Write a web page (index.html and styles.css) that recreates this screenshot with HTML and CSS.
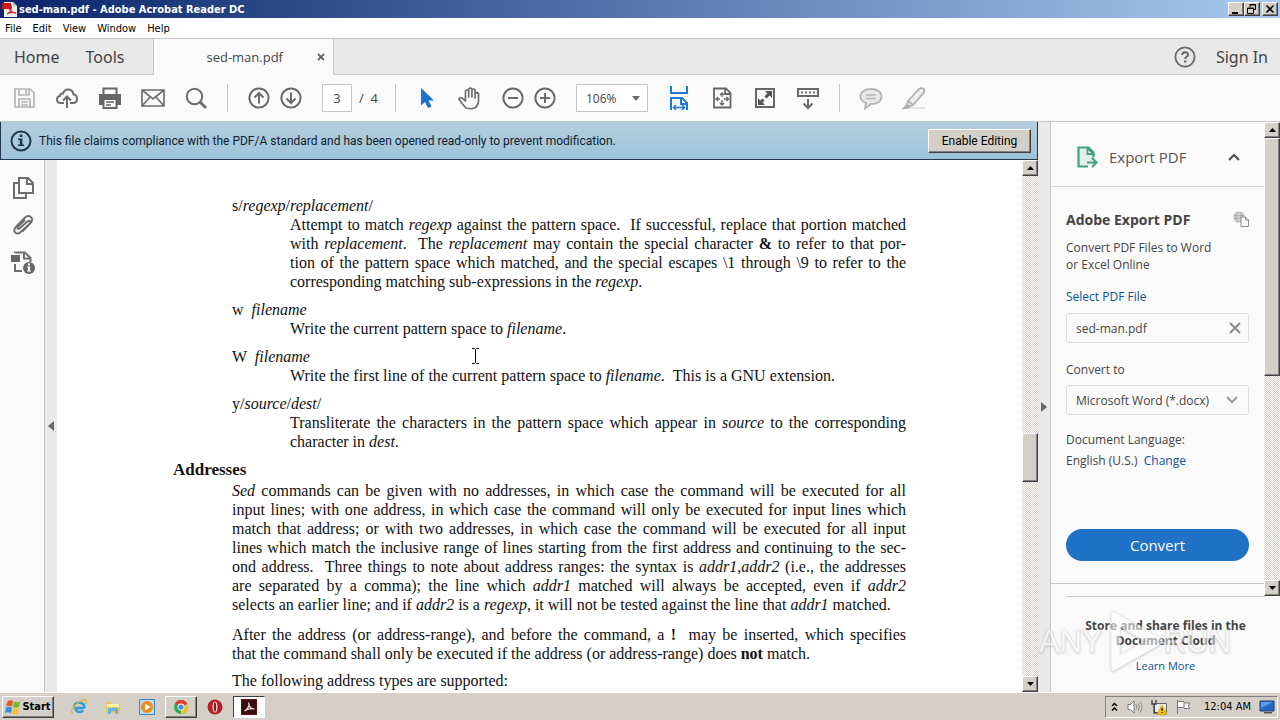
FILE: index.html
```html
<!DOCTYPE html>
<html lang="en">
<head>
<meta charset="utf-8">
<meta name="viewport" content="width=device-width, initial-scale=1">
<title>sed-man.pdf - Adobe Acrobat Reader DC</title>
<link rel="stylesheet" href="styles.css">
</head>
<body>
<div class="app">
  <header class="titlebar">
    <svg class="title-icon" viewBox="0 0 16 16"><path d="M2 1h9l4 4v11H2z" fill="#f3f0ee"/><path d="M11 1l4 4h-4z" fill="#bbb"/><path d="M0 2h9v6H0z" fill="#c8161d"/><path d="M5 13c4-2 5-6 4-9M6 6c2 4 5 6 8 6M5 13c3-2 6-2 9-1" fill="none" stroke="#d3222a" stroke-width="1.3"/></svg>
    <span class="title">sed-man.pdf - Adobe Acrobat Reader DC</span>
    <div class="window-buttons">
      <button class="raised winbtn" aria-label="Minimize"><svg viewBox="0 0 12 10"><path d="M2 8h6v2H2z"/></svg></button>
      <button class="raised winbtn" aria-label="Restore"><svg viewBox="0 0 12 10"><path d="M4 .5h5.500v5H8M4 0v3M4 1h6" fill="none" stroke="#000"/><path d="M1.500 4h6v5.500h-6zM1 4.500h7" fill="none" stroke="#000"/></svg></button>
      <button class="raised winbtn close" aria-label="Close"><svg viewBox="0 0 12 10"><path d="M2.500 1.500l7 7M9.500 1.500l-7 7" stroke="#000" stroke-width="1.600"/></svg></button>
    </div>
  </header>

  <nav class="menubar">
    <button>File</button><button>Edit</button><button>View</button><button>Window</button><button>Help</button>
  </nav>

  <nav class="tabs">
    <div class="tabs-main"><button class="tab-link">Home</button><button class="tab-link">Tools</button></div>
    <div class="tab-active"><span>sed-man.pdf</span><button class="tab-close" aria-label="Close tab"><svg viewBox="0 0 8 8"><path d="M1 1l6 6M7 1L1 7" stroke="#666" stroke-width="1.800"/></svg></button></div>
    <div class="tabs-end">
      <button class="help" aria-label="Help"><svg viewBox="0 0 22 22"><circle cx="11" cy="11" r="9.600" fill="none" stroke="#6a6a6a" stroke-width="1.800"/><path d="M8.200 9q0-2.800 2.900-2.800T14 8.800q0 1.300-1.600 2.200Q11.200 11.700 11.200 13" fill="none" stroke="#666" stroke-width="2"/><path d="M10 14.500h2.300v2H10z" fill="#666"/></svg></button>
      <button class="tab-link">Sign In</button>
    </div>
  </nav>

  <div class="toolbar">
    <div class="group">
      <button class="tool" aria-label="Save"><svg viewBox="0 0 24 24" fill="none" stroke="#b4b4b4" stroke-width="2"><path d="M3 3h15l4 4v14H3zM7 3v6h10V3M7 21v-8h11v8M14 4v4M9 16h7M9 19h7" stroke-width="1.700"/></svg></button>
      <button class="tool" aria-label="Upload"><svg viewBox="0 0 24 24" fill="none" stroke="#6e6e6e" stroke-width="2"><path d="M9 17H6Q2 17 2 13.500 2 10.500 5 10 5 7 8 7.500 9.500 3 13.500 3.500 18 4 18.500 8.500 22 9 22 13 22 17 18 17h-3M12 22V11M8 14.500l4-4 4 4"/></svg></button>
      <button class="tool" aria-label="Print"><svg viewBox="0 0 24 24"><path d="M1 8h22v11h-4v-4H5v4H1z" fill="#666"/><path d="M5.500 9V2.500h13V9" fill="#fafafa" stroke="#666" stroke-width="2"/><path d="M5.500 13h13v9h-13z" fill="#fafafa" stroke="#666" stroke-width="2"/><path d="M8 16h8M8 19h5" stroke="#666" stroke-width="1.500"/><path d="M1 8h22v3H1z" fill="#666"/></svg></button>
      <button class="tool" aria-label="Email"><svg viewBox="0 0 24 24" fill="none" stroke="#6e6e6e" stroke-width="1.700"><path d="M1 4h22v16H1zM1 4l11 9 11-9M1 20l8-9M23 20l-8-9"/></svg></button>
      <button class="tool" aria-label="Find"><svg viewBox="0 0 24 24" fill="none" stroke="#6e6e6e"><circle cx="10.500" cy="10.500" r="7.700" stroke-width="2"/><path d="M16 16l6 6" stroke-width="3"/></svg></button>
    </div>
    <i class="sep"></i>
    <div class="group tight">
      <button class="tool" aria-label="Previous page"><svg viewBox="0 0 24 24" fill="none" stroke="#6a6a6a" stroke-width="2"><circle cx="12" cy="12" r="9.600"/><path d="M12 17.500V7M7.500 11.500L12 7l4.500 4.500"/></svg></button>
      <button class="tool" aria-label="Next page"><svg viewBox="0 0 24 24" fill="none" stroke="#6a6a6a" stroke-width="2"><circle cx="12" cy="12" r="9.600"/><path d="M12 6.500V17M7.500 12.500L12 17l4.500-4.500"/></svg></button>
    </div>
    <label class="page-field"><input type="text" value="3" aria-label="Page number"><span>/&nbsp; 4</span></label>
    <i class="sep"></i>
    <div class="group">
      <button class="tool" aria-label="Select"><svg viewBox="0 0 24 24"><path d="M6 2v17.500l4-3.500 3 6 3.500-1.600-3-6H19z" fill="#1f73cf"/></svg></button>
      <button class="tool" aria-label="Hand"><svg viewBox="0 0 24 24" fill="none" stroke="#6e6e6e" stroke-width="1.700" stroke-linejoin="round" stroke-linecap="round"><path d="M8 22Q4 18 1 13 1.500 11 4 12l3.500 3V5q1.600-2 3.200 0v6V3q1.600-2 3.200 0v8V4q1.600-2 3.200 0v8V7.500q1.700-1.500 3.400 0V15q0 4-3.500 7-4.500 1.500-9 0z"/></svg></button>
      <div class="group tight">
        <button class="tool" aria-label="Zoom out"><svg viewBox="0 0 24 24" fill="none" stroke="#6a6a6a" stroke-width="2"><circle cx="12" cy="12" r="9.600"/><path d="M7 12h10"/></svg></button>
        <button class="tool" aria-label="Zoom in"><svg viewBox="0 0 24 24" fill="none" stroke="#6a6a6a" stroke-width="2"><circle cx="12" cy="12" r="9.600"/><path d="M7 12h10M12 7v10"/></svg></button>
      </div>
    </div>
    <div class="picker zoom"><select aria-label="Zoom level"><option>106%</option></select><svg viewBox="0 0 8 5"><path d="M0 0h8L4 5z" fill="#6a6a6a"/></svg></div>
    <div class="group">
      <button class="tool" aria-label="Fit width"><svg viewBox="0 0 24 24" fill="none" stroke="#1f78d1" stroke-width="2"><path d="M4 0v7h16V0M4 24V12h11l5 5v7M14 12v6h6"/><path d="M7 21.500h10M9 19l-2.500 2.500L9 24M15 19l2.500 2.500L15 24" stroke-width="1.500"/></svg></button>
      <button class="tool" aria-label="Fit page"><svg viewBox="0 0 24 24" fill="none" stroke="#666" stroke-width="1.800"><path d="M4 2.500h12l4.500 4.500v14.500H4zM15 2.500V8h5.500"/><path d="M12 7v4M12 14v5M6 13h4M14 13h5M10 9l2-2 2 2M10 17l2 2 2-2M8 11l-2 2 2 2M16.500 11l2 2-2 2" stroke-width="1.300"/></svg></button>
      <button class="tool" aria-label="Full screen"><svg viewBox="0 0 24 24"><path d="M3 3h18v18H3z" fill="#fafafa" stroke="#666" stroke-width="2"/><path d="M12 5h7v7l-2.400-2.400-3 3-2.200-2.200 3-3zM5 12l2.400 2.400 2-2 2.200 2.200-2 2L12 19H5z" fill="#555"/></svg></button>
      <button class="tool" aria-label="Read mode"><svg viewBox="0 0 24 24" fill="none" stroke="#6a6a6a" stroke-width="2"><path d="M2 3h20v7H2z"/><path d="M5 6.500h14" stroke-dasharray="2 2"/><path d="M12 13v9M7.500 17.500L12 22l4.500-4.500"/></svg></button>
    </div>
    <i class="sep"></i>
    <div class="group">
      <button class="tool" aria-label="Comment"><svg viewBox="0 0 24 24" fill="#e9e9e9" stroke="#b4b4b4" stroke-width="1.800"><path d="M12 3c6 0 10.500 3 10.500 7.500S18 18 12 18l-6 4.500 1-5.500C3 15.500 1.500 13 1.500 10.500 1.500 6 6 3 12 3z"/><path d="M7 9h10M7 12.500h10" stroke-width="1.400"/></svg></button>
      <button class="tool" aria-label="Highlight"><svg viewBox="0 0 24 24" fill="#eee" stroke="#b0b0b0" stroke-width="1.800"><path d="M8 21h15v2H6z" fill="#e4e4e4" stroke="none"/><path d="M6 15L16.500 3.500Q19 1 21.500 3q1.500 1.500 0 4L11 19l-5-4zM6 15l-1 4 2 1.500 4-1.500"/><path d="M5 19l-3.500 3.500L6 22l1.500-1.500z" fill="#aaa"/></svg></button>
    </div>
  </div>

  <main class="workspace">
    <section class="viewer">
      <div class="notice">
        <svg viewBox="0 0 22 22"><circle cx="11" cy="11" r="9.500" fill="none" stroke="#22384a" stroke-width="2"/><path d="M9.800 4.500h2.600V7H9.800zM8 8.500h4.400v6H14V16H8v-1.500h1.800V10H8z" fill="#22384a"/></svg>
        <p>This file claims compliance with the PDF/A standard and has been opened read-only to prevent modification.</p>
        <button class="raised enable">Enable Editing</button>
      </div>
      <div class="viewer-body">
        <aside class="rail">
          <button aria-label="Page thumbnails"><svg viewBox="0 0 24 24" fill="none" stroke="#6e6e6e" stroke-width="2"><path d="M8 2h9l5 5v10H8zM16 2v6h6M8 7H3v15h12v-5"/></svg></button>
          <button aria-label="Attachments"><svg viewBox="0 0 24 24" fill="none" stroke="#6e6e6e" stroke-width="1.900" stroke-linecap="round"><path d="M8.500 15.500l8-7c2-1.800 4 .3 2.200 2.200l-9 8.300c-4.500 4-8.500-1-5-4.800L13.500 5c4.500-4.500 10 0 6.300 5l-8 8M8.500 15.500c-1.500 1.500-3-.5-1.500-2l6.500-6"/></svg></button>
          <button aria-label="Standards"><svg viewBox="0 0 24 24"><path d="M4 3v-.5h10l5.500 5.500v4M13 2.500V8.500h6.500M4 14v7h7" fill="none" stroke="#6e6e6e" stroke-width="2"/><path d="M0 5h9v7H0z" fill="#666"/><circle cx="18" cy="18" r="6" fill="#666"/><path d="M17 13.500h2v2h-2zM16 16.500h3v4h1v1h-4v-1h1v-3h-1z" fill="#fff"/></svg></button>
        </aside>
        <button class="grip left" aria-label="Open navigation pane"><svg viewBox="0 0 6 10"><path d="M6 0v10L0 5z" fill="#6a6a6a"/></svg></button>
        <article class="page">
          <h3 class="term">s/<i>regexp</i>/<i>replacement</i>/</h3>
          <p class="def"><span class="line">Attempt to match <i>regexp</i> against the pattern space. &nbsp;If successful, replace that portion matched</span><span class="line">with <i>replacement</i>. &nbsp;The <i>replacement</i> may contain the special character <b>&amp;</b> to refer to that por-</span><span class="line">tion of the pattern space which matched, and the special escapes \1 through \9 to refer to the</span><span class="line end">corresponding matching sub-expressions in the <i>regexp</i>.</span></p>
          <h3 class="term">w &nbsp;<i>filename</i></h3>
          <p class="def">Write the current pattern space to <i>filename</i>.</p>
          <h3 class="term">W &nbsp;<i>filename</i></h3>
          <p class="def">Write the first line of the current pattern space to <i>filename</i>. &nbsp;This is a GNU extension.</p>
          <h3 class="term">y/<i>source</i>/<i>dest</i>/</h3>
          <p class="def"><span class="line">Transliterate the characters in the pattern space which appear in <i>source</i> to the corresponding</span><span class="line end">character in <i>dest</i>.</span></p>
          <h2>Addresses</h2>
          <p><span class="line"><i>Sed</i> commands can be given with no addresses, in which case the command will be executed for all</span><span class="line">input lines; with one address, in which case the command will only be executed for input lines which</span><span class="line">match that address; or with two addresses, in which case the command will be executed for all input</span><span class="line">lines which match the inclusive range of lines starting from the first address and continuing to the sec-</span><span class="line">ond address. &nbsp;Three things to note about address ranges: the syntax is <i>addr1</i>,<i>addr2</i> (i.e., the addresses</span><span class="line">are separated by a comma); the line which <i>addr1</i> matched will always be accepted, even if <i>addr2</i></span><span class="line end">selects an earlier line; and if <i>addr2</i> is a <i>regexp</i>, it will not be tested against the line that <i>addr1</i> matched.</span></p>
          <p class="para"><span class="line">After the address (or address-range), and before the command, a <b>!</b> &nbsp;may be inserted, which specifies</span><span class="line end">that the command shall only be executed if the address (or address-range) does <b>not</b> match.</span></p>
          <p class="para last">The following address types are supported:</p>
          <svg class="ibeam" viewBox="0 0 9 16"><path d="M1 .5h2.500l1 1 1-1H8M4.500 1.500v13M1 15.500h2.500l1-1 1 1H8" fill="none" stroke="#000"/></svg>
        </article>
        <div class="scrollbar">
          <button class="raised arrow" aria-label="Scroll up"><svg viewBox="0 0 7 4"><path d="M0 4h7L3.500 0z"/></svg></button>
          <span class="space-before"></span><span class="raised thumb"></span><span class="space-after"></span>
          <button class="raised arrow" aria-label="Scroll down"><svg viewBox="0 0 7 4"><path d="M0 0h7L3.500 4z"/></svg></button>
        </div>
      </div>
    </section>
    <button class="grip right" aria-label="Close tools pane"><svg viewBox="0 0 6 10"><path d="M0 0v10l6-5z" fill="#6a6a6a"/></svg></button>
    <aside class="panel">
      <div class="panel-scroll">
        <div class="panel-main">
          <button class="panel-head">
            <svg class="export" viewBox="0 0 22 24"><path d="M12 21.500H2.500V2.500h10l5 5v5" fill="#e2efec" stroke="#3fa184" stroke-width="2.200"/><path d="M11.500 3v6h6z" fill="#fafafa" stroke="#3fa184" stroke-width="1.800"/><path d="M11 17.500h9M16 13l4.500 4.500L16 22" fill="none" stroke="#3fa184" stroke-width="2.200"/></svg>
            <span>Export PDF</span>
            <svg class="chev" viewBox="0 0 12 8"><path d="M1 7l5-5 5 5" fill="none" stroke="#4a4a4a" stroke-width="2"/></svg>
          </button>
          <div class="panel-body">
            <div class="panel-title"><h2>Adobe Export PDF</h2><svg viewBox="0 0 16 16"><circle cx="6" cy="6" r="5.500" fill="#a8a8a8"/><path d="M0 6h12M6 0v12M1.500 3h9M1.500 9h9" stroke="#f2f2f2" stroke-width=".7"/><path d="M8 6h4.500L15.500 9v6.500H8z" fill="#fafafa" stroke="#8c8c8c"/><path d="M12.500 6v3h3" fill="none" stroke="#8c8c8c"/></svg></div>
            <p class="intro">Convert PDF Files to Word<br>or Excel Online</p>
            <a class="select-file" href="#">Select PDF File</a>
            <div class="file"><span>sed-man.pdf</span><button aria-label="Remove file"><svg viewBox="0 0 12 12"><path d="M1 1l10 10M11 1L1 11" stroke="#8c8c8c" stroke-width="2"/></svg></button></div>
            <label class="to" for="fmt">Convert to</label>
            <div class="picker format"><select id="fmt"><option>Microsoft Word (*.docx)</option></select><svg viewBox="0 0 12 8"><path d="M1 1l5 5 5-5" fill="none" stroke="#999" stroke-width="2"/></svg></div>
            <p class="lang">Document Language:</p>
            <p class="lang-value">English (U.S.)&nbsp; <a href="#">Change</a></p>
            <button class="convert">Convert</button>
          </div>
        </div>
        <div class="scrollbar">
          <button class="raised arrow" aria-label="Scroll up"><svg viewBox="0 0 7 4"><path d="M0 4h7L3.500 0z"/></svg></button>
          <span class="raised thumb long"></span><span class="space-after"></span>
          <button class="raised arrow" aria-label="Scroll down"><svg viewBox="0 0 7 4"><path d="M0 0h7L3.500 4z"/></svg></button>
        </div>
      </div>
      <div class="store"><p>Store and share files in the<br>Document Cloud</p><a href="#">Learn More</a></div>
      <svg class="watermark" viewBox="0 0 196 64"><g fill="#fff" stroke="#dcdcdc" stroke-width="1"><text x="1" y="43">ANY</text><text x="126" y="43">RUN</text><path d="M73 5q0-4 4-2l46 26q4 3 0 6L77 61q-4 2-4-2zM82 18v28l25-14z" fill-rule="evenodd"/></g></svg>
    </aside>
  </main>

  <footer class="taskbar">
    <button class="raised start"><svg viewBox="0 0 16 16"><path d="M2.500 2.500Q5 .5 8 2L7 7.500Q4 6 1 7.500z" fill="#e4572b"/><path d="M9 2.500q3 1.500 6 0L14 8q-3 1.500-6 0z" fill="#76b82a"/><path d="M1 8.500q3-1.500 6 0L6 14q-3-1.500-6 0z" fill="#3a8bd8"/><path d="M8 9q3 1.500 6 0l-1 5.500q-3 1.500-6 0z" fill="#f8c32c"/></svg>Start</button>
    <div class="tasks">
      <button aria-label="Internet Explorer"><svg viewBox="0 0 16 16" fill="none"><path d="M13.500 9H4.500Q5 13 8.500 13q2.500 0 3.500-1.500M3 9q0-5.500 5.500-5.500Q13.500 4 13.500 9" stroke="#2b9ee0" stroke-width="2.600"/><path d="M2 14Q-1 14 2 9.500 7 2 13 1q4-.5 1.500 4" stroke="#e5b63c" stroke-width="1.300"/></svg></button>
      <button aria-label="Explorer"><svg viewBox="0 0 16 16"><path d="M1 3h5l1 2h8v9H1z" fill="#e8c95c"/><path d="M2 5h12v3H2z" fill="#fbf0ae"/><path d="M3 9h10v6h-3v-3H6v3H3z" fill="#5fb5e5"/></svg></button>
      <button aria-label="Media Player"><svg viewBox="0 0 16 16"><path d="M.5.5h15v15H.5z" fill="#b8dcf5" stroke="#3d87bf"/><circle cx="8" cy="8" r="6" fill="#f08a19"/><path d="M6 4.500v7L11.500 8z" fill="#fff"/></svg></button>
      <button class="raised" aria-label="Chrome"><svg viewBox="0 0 16 16"><circle cx="8" cy="8" r="7" fill="#30a852"/><path d="M8 8L2 4.400A7 7 0 0 1 14.300 5z" fill="#e33b2e"/><path d="M8 8l6.300-3A7 7 0 0 1 8 15z" fill="#fbc116"/><circle cx="8" cy="8" r="3.400" fill="#fff"/><circle cx="8" cy="8" r="2.600" fill="#4285f4"/></svg></button>
      <button aria-label="Opera"><svg viewBox="0 0 16 16"><circle cx="8" cy="8" r="7.500" fill="#b81f22"/><ellipse cx="8" cy="8" rx="2.500" ry="5.500" fill="#eee"/><ellipse cx="8" cy="8" rx="1.200" ry="4.800" fill="#8c1518"/></svg></button>
      <button class="pressed" aria-label="Acrobat Reader"><svg viewBox="0 0 16 16"><path d="M0 0h16v16H0z" fill="#6b0c12"/><path d="M1 1h14v14H1z" fill="#3a0c10"/><path d="M3.500 12C7 10 9 6 7.500 3.500M8 6c1 3 3 4 5.500 4M3.500 12c3-2 6-3 10-2" fill="none" stroke="#f3dcdc" stroke-width="1.200"/></svg></button>
    </div>
    <div class="tray">
      <svg class="up" viewBox="0 0 8 10"><path d="M1 4l2.500-2.500L6 4M1 8.500L3.500 6 6 8.500" fill="none" stroke="#000" stroke-width="1.500"/></svg>
      <svg viewBox="0 0 16 16"><path d="M1 5.500h2.500L7 2v12l-3.500-3.500H1z" fill="#fff" stroke="#777"/><path d="M9 5.500q2 2.500 0 5M11 4q3 4 0 8M13 2.500q4 5.500 0 11" fill="none" stroke="#8a8a8a"/></svg>
      <svg viewBox="0 0 16 16"><path d="M3.500 4.500h12v9h-12z" fill="#e9e9e4" stroke="#666"/><path d="M1 1v4h4V1M3 5v9h3" fill="none" stroke="#444" stroke-width="1.400"/><path d="M11 6l5 9.500H6z" fill="#f8c500" stroke="#a88600" stroke-width=".5"/><path d="M10.400 9h1.200v3h-1.200zM10.400 13h1.200v1h-1.200z"/></svg>
      <svg viewBox="0 0 16 16"><path d="M2.500 1v14M3 2.500h6v6H3M9 4h6l-2 3 2 2.500H9" fill="#fff" stroke="#777"/></svg>
      <time>12:04 AM</time>
      <svg viewBox="0 0 16 16"><path d="M1 2h14v10H1z" fill="#2467c2" stroke="#18437d"/><path d="M2 3h12L2 9z" fill="#5e9ce4"/><path d="M5 13h8v1.500H5z" fill="#555"/></svg>
    </div>
  </footer>
</div>
</body>
</html>
```
FILE: styles.css
```css
* { box-sizing: border-box; }
body { margin: 0; background: #fafafa; color: #444; font-family: "Open Sans", "Noto Sans", sans-serif; font-size: 12px; }
h2, h3, p { margin: 0; }
button { padding: 0; border: 0; background: none; color: inherit; font: inherit; display: flex; align-items: center; justify-content: center; }
svg { display: block; flex: none; }
a { color: #0b5396; text-decoration: none; }

.app { min-height: 100vh; display: flex; flex-direction: column; }

.raised { background: #d4d0c8; border: 1px solid; border-color: #fff #404040 #404040 #fff; box-shadow: inset -1px -1px #808080; color: #000; }

/* Title bar and menu */
.titlebar { height: 18px; display: flex; align-items: center; padding: 0 2px; gap: 1px; background: linear-gradient(90deg, #0a246a, #a6caf0); }
.title-icon { width: 16px; height: 16px; }
.title { flex: 1; color: #fff; font: bold 11px "DejaVu Sans Condensed", "DejaVu Sans", sans-serif; }
.window-buttons { display: flex; }
.winbtn { width: 16px; height: 14px; }
.winbtn svg { width: 12px; height: 10px; }
.close { margin-left: 2px; }
.menubar { height: 20px; display: flex; align-items: center; gap: 11px; padding: 0 5px; background: #fff; color: #000; font: 11px "DejaVu Sans Condensed", "DejaVu Sans", sans-serif; }

/* Tabs */
.tabs { height: 37px; display: flex; border-top: 1px solid #c6c6c6; }
.tabs-main, .tabs-end { display: flex; align-items: center; background: #e9e9e9; border-bottom: 1px solid #c6c6c6; }
.tabs-main { width: 154px; padding-left: 14px; gap: 26px; border-right: 1px solid #c6c6c6; }
.tab-link { font-size: 16px; font-family: "Noto Sans", sans-serif; }
.tab-active { width: 179px; display: flex; align-items: center; justify-content: flex-end; gap: 34px; padding-right: 8px; font-size: 13px; }
.tab-close svg { width: 8px; height: 8px; }
.tabs-end { flex: 1; justify-content: flex-end; gap: 20px; padding-right: 12px; border-left: 1px solid #c6c6c6; }
.help svg { width: 22px; height: 22px; }

/* Toolbar */
.toolbar { height: 47px; display: flex; align-items: center; gap: 17px; padding: 0 10px; border-bottom: 1px solid #c6c6c6; }
.group { display: flex; gap: 15px; }
.tight { gap: 4px; }
.tool { width: 28px; height: 28px; }
.tool svg { width: 24px; height: 24px; }
.sep { width: 1px; height: 28px; background: #c6c6c6; }
.page-field { width: 56px; display: flex; align-items: center; gap: 7px; font-size: 13px; white-space: nowrap; }
.page-field input { width: 30px; height: 28px; padding: 0; border: 1px solid #c6c6c6; background: #fff; color: #444; font: inherit; text-align: center; flex: none; }
.picker { display: grid; align-items: center; }
.picker select, .picker svg { grid-area: 1 / 1; }
.picker svg { justify-self: end; pointer-events: none; }
.picker select { appearance: none; width: 100%; border: 1px solid #c6c6c6; background: #fff; color: #444; font: inherit; }
.zoom { width: 72px; }
.zoom select { height: 28px; padding: 0 9px; }
.zoom svg { width: 8px; height: 5px; margin-right: 8px; }

/* Workspace */
.workspace { flex: 1; display: flex; min-height: 0; }
.viewer { flex: 1; min-width: 0; display: flex; flex-direction: column; }
.notice { height: 38px; display: flex; align-items: center; gap: 7px; padding: 0 6px 0 9px; color: #10202c; background: linear-gradient(#b4cfdf, #9dc3d9); border: 1px solid #22384a; border-top: 0; font-family: Roboto, "Open Sans", sans-serif; }
.notice svg { width: 22px; height: 22px; }
.notice p { flex: 1; white-space: nowrap; }
.enable { width: 103px; height: 24px; }
.viewer-body { flex: 1; display: flex; min-height: 0; }
.rail { width: 45px; display: flex; flex-direction: column; gap: 13px; padding: 16px 0 0 2px; border-right: 1px solid #c6c6c6; align-items: center; }
.rail svg { width: 24px; height: 24px; }
.grip { width: 12px; background: #e9e9e9; flex: none; }
.grip svg { width: 6px; height: 10px; }

/* Document page */
.page { flex: 1; position: relative; background: #fff; color: #111; padding: 36px 116px 0 175px; font: 16px/19px "Liberation Serif", "Times New Roman", serif; }
.page h2 { font-size: 17px; line-height: 19px; margin: 8px 0 2px -59px; }
.term { font-size: 16px; font-weight: normal; }
.def { padding-left: 58px; margin-bottom: 9px; }
.line { display: block; white-space: nowrap; text-align: justify; text-align-last: justify; }
.line.end { text-align-last: left; }
.para { margin-top: 11px; }
.para.last { margin-top: 8px; }
.ibeam { position: absolute; left: 414px; top: 188px; width: 9px; height: 16px; }

/* Scroll bars */
.scrollbar { width: 16px; display: flex; flex-direction: column; flex: none; background: repeating-conic-gradient(#d4d0c8 0 25%, #fff 0 50%) 0 0 / 2px 2px; }
.arrow { height: 16px; }
.arrow svg { width: 7px; height: 4px; }
.space-before { flex: 257; }
.thumb { height: 49px; }
.thumb.long { height: auto; flex: 237; }
.space-after { flex: 194; }
.long + .space-after { flex: 205; }

/* Tools panel */
.panel { width: 230px; position: relative; display: flex; flex-direction: column; border-left: 1px solid #c6c6c6; color: #444; }
.panel-scroll { display: flex; flex: 1; }
.panel-main { flex: 1; border-bottom: 1px solid #c6c6c6; margin-bottom: 12px; }
.panel-head { width: 100%; height: 65px; padding: 6px 24px 0 25px; border-bottom: 1px solid #d4d4d4; font-size: 15px; color: #555; }
.panel-head span { flex: 1; text-align: left; padding-left: 11px; }
.export { width: 22px; height: 24px; }
.chev { width: 12px; height: 8px; }
.panel-body { padding: 22px 15px 0; }
.panel-title { display: flex; justify-content: space-between; align-items: center; height: 20px; }
.panel-title h2 { font-size: 14px; }
.panel-title svg { width: 16px; height: 16px; }
.intro { line-height: 17px; margin-top: 10px; }
.select-file { display: block; line-height: 18px; margin-top: 15px; }
.file { height: 30px; display: flex; align-items: center; justify-content: space-between; margin-top: 7px; padding: 0 7px 0 9px; border: 1px solid #dcdcdc; border-radius: 3px; }
.file svg { width: 12px; height: 12px; }
.to { display: block; line-height: 18px; margin: 18px 0 6px; }
.format select { height: 30px; padding: 0 9px; border-color: #dcdcdc; border-radius: 3px; background: #fafafa; }
.format svg { width: 12px; height: 8px; margin-right: 11px; }
.lang { line-height: 18px; margin-top: 16px; }
.lang-value { line-height: 18px; margin-top: 3px; }
.convert { width: 100%; height: 32px; margin-top: 59px; border-radius: 16px; background: #1f72c6; color: #fff; font-size: 15px; }
.store { height: 96px; margin: 0 15px; padding-top: 21px; border-top: 1px solid #c6c6c6; text-align: center; line-height: 15px; }
.store p { font-weight: bold; margin-bottom: 10px; }
.store a { font-size: 11px; }
.watermark { position: absolute; right: 46px; bottom: 19px; width: 196px; height: 64px; opacity: 0.55; pointer-events: none; font: 31px "Liberation Sans", Arial, sans-serif; filter: drop-shadow(0 1px 1px #aaa); }

/* Taskbar */
.taskbar { height: 28px; display: flex; align-items: center; background: #d4d0c8; border-top: 1px solid #fff; padding: 0 2px; color: #000; font: 11px "DejaVu Sans Condensed", "DejaVu Sans", sans-serif; }
.start { width: 52px; height: 22px; gap: 1px; font-weight: bold; }
.start svg { width: 16px; height: 16px; }
.tasks { display: flex; gap: 2px; margin-left: 9px; flex: 1; }
.tasks button { width: 32px; height: 22px; }
.tasks svg { width: 16px; height: 16px; }
.pressed { background: #fff; border: 1px solid; border-color: #404040 #fff #fff #404040; }
.tray { height: 22px; display: flex; align-items: center; gap: 8px; padding: 0 2px 0 5px; border: 1px solid; border-color: #808080 #fff #fff #808080; }
.tray svg { width: 16px; height: 16px; }
.tray .up { width: 8px; height: 10px; }
.tray time { margin-left: 5px; }
```
